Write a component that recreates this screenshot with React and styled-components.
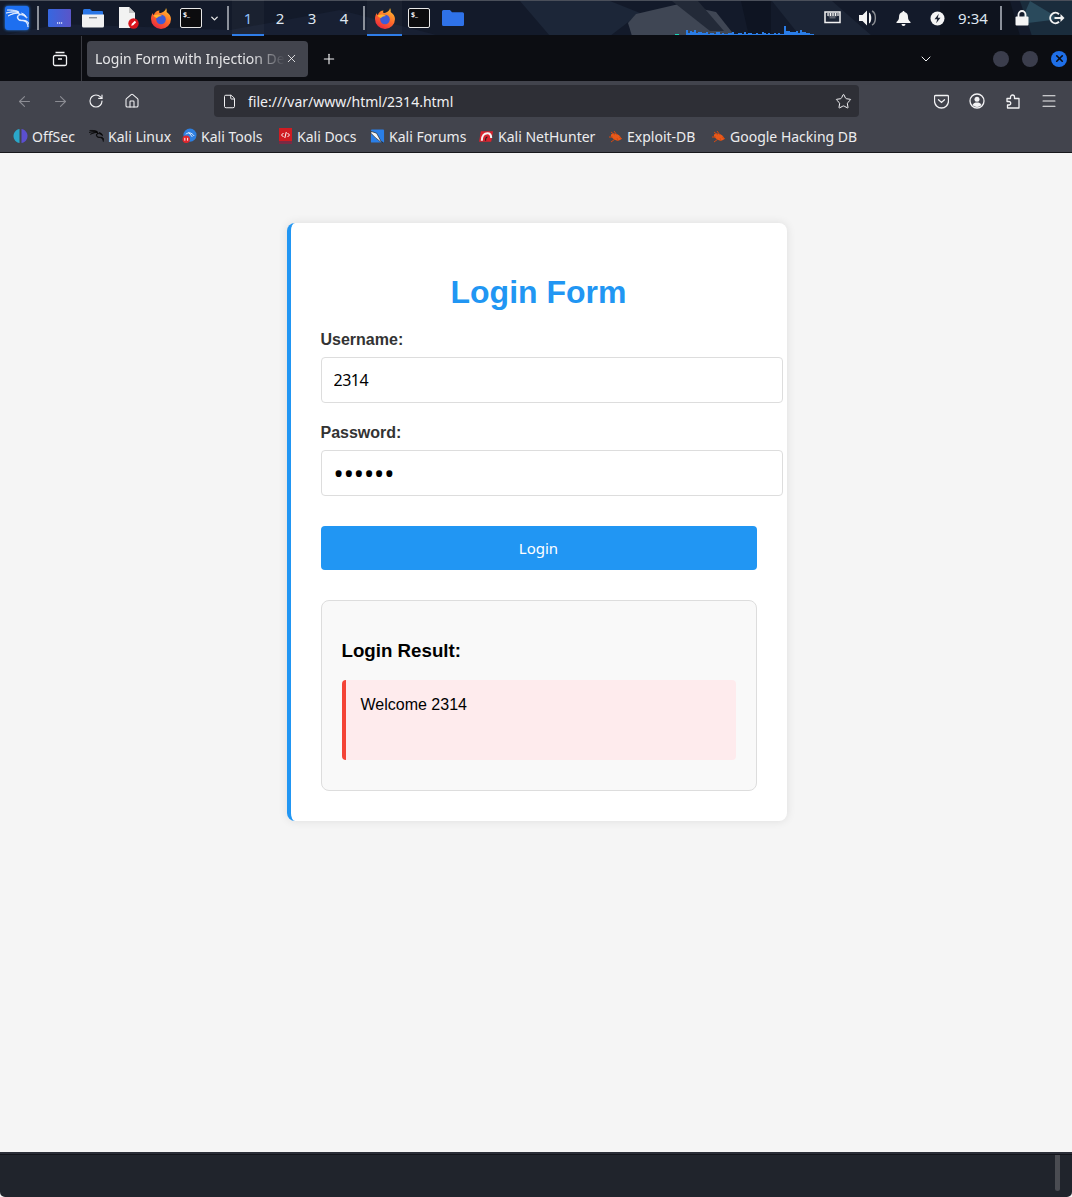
import React from 'react';
import styled, { createGlobalStyle } from 'styled-components';
import { ArrowLeft, ArrowRight, ChevronDown, File, Home, Menu, Plus, RotateCw, Star, X } from 'lucide-react';
import { SiKalilinux } from 'react-icons/si';

const UI_FONT = '"Noto Sans", "Open Sans", sans-serif';
const PAGE_FONT = '"Liberation Sans", Arial, sans-serif';

const GlobalStyle = createGlobalStyle`
  html, body {
    margin: 0;
    padding: 0;
    height: 100%;
    overflow: hidden;
  }
  #root {
    height: 100%;
  }
`;

const Screen = styled.div`
  display: flex;
  flex-direction: column;
  height: 1197px;
  background: #f5f5f5;
  font-family: ${UI_FONT};
`;

/* ---------- desktop panel ---------- */

const Panel = styled.div`
  position: relative;
  display: flex;
  height: 36px;
  flex: none;
  overflow: hidden;
  background: #131a2b;
  color: #fff;
`;

const Wallpaper = styled.svg`
  position: absolute;
  inset: 0;
`;

const Slot = styled.div`
  position: relative;
  display: flex;
  flex: none;
  width: ${(p) => p.$w}px;
  align-items: center;
  justify-content: center;
  box-sizing: border-box;
  padding-left: ${(p) => p.$pad || 0}px;
  background: ${(p) => (p.$active ? 'rgba(255,255,255,0.03)' : 'transparent')};
  border-bottom: 2px solid ${(p) => (p.$active ? '#2f7de8' : 'transparent')};
  border-top: 2px solid transparent;
  font-size: 15px;
  color: ${(p) => (p.$active ? '#8fc0f5' : '#dfe6f0')};
`;

const PanelSep = styled.div`
  width: 2px;
  height: 24px;
  background: #8b909a;
`;

const LogoTile = styled.div`
  display: flex;
  width: 24px;
  height: 24px;
  align-items: center;
  justify-content: center;
  border-radius: 3px;
  background: #1d6ff0;
  box-shadow: 0 0 3px #2f8cff;
  color: #f4f8ff;
`;

const Spacer = styled.div`
  flex: 1;
`;

const Graph = styled.svg`
  position: relative;
  flex: none;
  align-self: flex-end;
  display: block;
`;

/* ---------- browser chrome ---------- */

const TabStrip = styled.div`
  display: flex;
  height: 45px;
  flex: none;
  align-items: center;
  background: #0c0d12;
  color: #f2f2f4;
`;

const ViewButton = styled.div`
  display: flex;
  width: 82px;
  height: 100%;
  box-sizing: border-box;
  flex: none;
  align-items: center;
  justify-content: center;
  padding-left: 38px;
  border-right: 1px solid #3a3b42;
`;

const Tab = styled.div`
  display: flex;
  width: 221px;
  height: 36px;
  margin-left: 5px;
  box-sizing: border-box;
  flex: none;
  align-items: center;
  padding: 0 10px 0 8px;
  border-radius: 4px;
  background: #42444d;
`;

const TabTitle = styled.div`
  flex: 1;
  white-space: nowrap;
  font-size: 14px;
  color: #e6e6e8;
  -webkit-mask-image: linear-gradient(to right, #000 82%, transparent 100%);
  mask-image: linear-gradient(to right, #000 82%, transparent 100%);
`;

const NewTab = styled.div`
  display: flex;
  margin-left: 13px;
  align-items: center;
`;

const ListTabs = styled.div`
  display: flex;
  margin-left: auto;
  margin-right: 59px;
`;

const WindowDot = styled.div`
  display: flex;
  width: 16px;
  height: 16px;
  margin-right: 13px;
  align-items: center;
  justify-content: center;
  border-radius: 50%;
  background: ${(p) => (p.$close ? '#1f6fe8' : '#3b3d4c')};
  color: #0c0d12;
  &:last-child {
    margin-right: 5px;
  }
`;

const NavBar = styled.div`
  display: flex;
  height: 37px;
  flex: none;
  align-items: flex-start;
  background: #42444d;
  color: #f2f2f4;
`;

const NavButton = styled.div`
  display: flex;
  width: 36px;
  height: 32px;
  margin-top: 4px;
  flex: none;
  align-items: center;
  justify-content: center;
  color: ${(p) => (p.$dim ? '#8b8c93' : '#f2f2f4')};
`;

const NavLead = styled.div`
  width: 6px;
  flex: none;
`;

const UrlBar = styled.div`
  display: flex;
  width: 645px;
  height: 32px;
  margin: 4px 0 0 64px;
  box-sizing: border-box;
  flex: none;
  align-items: center;
  padding: 0 7px 0 8px;
  border-radius: 4px;
  background: #2e2f36;
`;

const UrlText = styled.div`
  flex: 1;
  margin-left: 11px;
  font-size: 14px;
  color: #f0f0f2;
`;

const NavRight = styled.div`
  display: flex;
  margin-left: auto;
  padding-right: 5px;
`;

const Bookmarks = styled.div`
  display: flex;
  height: 35px;
  flex: none;
  box-sizing: border-box;
  align-items: center;
  padding: 2px 0 0 13px;
  background: #42444d;
  border-bottom: 1px solid #17181c;
`;

const Bookmark = styled.div`
  display: flex;
  width: ${(p) => p.$w}px;
  flex: none;
  align-items: center;
  gap: 4px;
  white-space: nowrap;
  font-size: 14px;
  color: #ececee;
`;

const BookmarkIcon = styled.span`
  display: flex;
  width: 15px;
  flex: none;
  justify-content: center;
`;

/* ---------- page ---------- */

const Page = styled.main`
  flex: 1;
  min-height: 0;
  padding: 70px 0 0 1px;
`;

const Card = styled.section`
  width: 500px;
  margin: 0 auto;
  padding: 30px;
  box-sizing: border-box;
  border-left: 4px solid #2196f3;
  border-radius: 8px;
  background: #fff;
  box-shadow: 0 0 10px rgba(0, 0, 0, 0.1);
  font-family: ${PAGE_FONT};
`;

const Title = styled.h2`
  margin: 21px 0 20px;
  text-align: center;
  font-size: 32px;
  font-weight: 700;
  line-height: 37px;
  color: #2196f3;
`;

const Label = styled.label`
  display: block;
  margin-bottom: 8px;
  font-size: 16px;
  font-weight: 700;
  line-height: 18px;
  color: #333;
`;

const Field = styled.input`
  display: block;
  width: 100%;
  height: 20px;
  margin-bottom: 21px;
  padding: 12px;
  box-sizing: content-box;
  border: 1px solid #ddd;
  border-radius: 4px;
  outline: none;
  background: #fff;
  font-family: ${UI_FONT};
  font-size: 16px;
  letter-spacing: -0.5px;
  color: #000;
`;

const SecretField = styled(Field)`
  font-size: 27px;
  letter-spacing: 0;
`;

const LoginButton = styled.button`
  display: block;
  width: 100%;
  height: 44px;
  margin-top: 30px;
  padding: 0;
  border: 0;
  border-radius: 4px;
  background: #2196f3;
  font-family: ${UI_FONT};
  font-size: 15px;
  color: #fff;
`;

const ResultBox = styled.div`
  margin-top: 30px;
  padding: 20px;
  box-sizing: border-box;
  border: 1px solid #ddd;
  border-radius: 8px;
  background: #f9f9f9;
`;

const ResultTitle = styled.h3`
  margin: 19px 0 19px;
  font-size: 18.72px;
  font-weight: 700;
  line-height: 21px;
  color: #000;
`;

const Message = styled.div`
  height: 80px;
  margin-bottom: 10px;
  padding: 16px 15px;
  box-sizing: border-box;
  border-left: 4px solid #f44336;
  border-radius: 4px;
  background: #feebed;
  font-size: 16px;
  line-height: 18px;
  color: #000;
`;

/* ---------- bottom panel ---------- */

const BottomPanel = styled.div`
  display: flex;
  height: 45px;
  flex: none;
  box-sizing: border-box;
  justify-content: flex-end;
  padding: 0 12px 6px 0;
  border-top: 2px solid #2b2e38;
  background: #20242c;
  box-shadow: inset 0 1px 0 #12141a;
  border-radius: 0 0 5px 5px;
`;

const PanelGrip = styled.div`
  width: 5px;
  margin-top: 1px;
  border-radius: 0 0 3px 3px;
  background: #4a4c52;
`;

/* ---------- drawn icons ---------- */

const WindowsIcon = () => (
  <svg width="23" height="18" viewBox="0 0 23 18">
    <defs>
      <linearGradient id="winGrad" x1="0" y1="0" x2="1" y2="0">
        <stop offset="0" stopColor="#3667e0" />
        <stop offset="1" stopColor="#5a55c8" />
      </linearGradient>
    </defs>
    <rect width="23" height="18" rx="1" fill="url(#winGrad)" />
    <path d="M9 14h1.200M11 14h1.200M13 14h1.200" stroke="#dfe6ff" strokeWidth="1.600" />
  </svg>
);

const FilesIcon = () => (
  <svg width="22" height="20" viewBox="0 0 22 20">
    <path d="M1 2.5A1.5 1.5 0 0 1 2.500 1H8l2 2h10a1 1 0 0 1 1 1v3H1z" fill="#2a76e6" />
    <path d="M0 6.500h22V18a1.500 1.500 0 0 1-1.500 1.500h-19A1.500 1.500 0 0 1 0 18z" fill="#f1f1f1" />
    <rect x="7" y="9" width="8" height="1.400" fill="#8f9296" />
  </svg>
);

const DocIcon = () => (
  <svg width="21" height="22" viewBox="0 0 21 22">
    <path d="M1 0h10l6 6v15H1z" fill="#f2f2f2" />
    <path d="M11 0l6 6h-6z" fill="#c4c4c4" />
    <circle cx="15.500" cy="16.500" r="5.200" fill="#d8141c" />
    <path d="M13.200 18.800l.6-2 3-3 1.400 1.400-3 3z" fill="#fff" />
  </svg>
);

const FirefoxIcon = ({ id }) => (
  <svg width="22" height="22" viewBox="0 0 22 22">
    <defs>
      <linearGradient id={id} x1="0.800" y1="0" x2="0.200" y2="1">
        <stop offset="0" stopColor="#ffc02e" />
        <stop offset="0.500" stopColor="#ff6a2b" />
        <stop offset="1" stopColor="#e8213f" />
      </linearGradient>
    </defs>
    <path
      d="M16 1c1 2 .8 3 .6 4 2.600 1.800 4.400 4 4.400 7a10 10 0 0 1-20 0c0-2.500.7-4.500 1.800-6 0 1 .4 1.700 1 2C4.500 5.500 7 3.500 9.500 3.500c-.500 1-.4 1.800 0 2.500C12 6 15.500 4.500 16 1z"
      fill={`url(#${id})`}
    />
    <circle cx="11" cy="12.500" r="4.800" fill="#3d5bd8" />
    <path d="M3.500 8.500c3-1.500 6-1.300 8.500.5-2.500 0-4 .7-5 2-1.500-.3-2.800-1.200-3.500-2.500z" fill="#ffb52e" />
  </svg>
);

const TerminalIcon = () => (
  <svg width="22" height="20" viewBox="0 0 22 20">
    <rect x="0.500" y="0.500" width="21" height="19" rx="1.500" fill="#0c0c0e" stroke="#e8e8e8" />
    <text x="3" y="8.500" fontSize="7" fontWeight="700" fontFamily={UI_FONT} fill="#f0f0f0">
      $_
    </text>
  </svg>
);

const FolderIcon = () => (
  <svg width="22" height="16" viewBox="0 0 22 16">
    <path
      d="M0 1.500A1.500 1.500 0 0 1 1.500 0H8l2 2.200h10.500A1.500 1.500 0 0 1 22 3.700v10.800a1.500 1.500 0 0 1-1.500 1.500h-19A1.500 1.500 0 0 1 0 14.500z"
      fill="#2f72e8"
    />
  </svg>
);

const NetworkIcon = () => (
  <svg width="17" height="14" viewBox="0 0 17 14">
    <path d="M1 1h15v10.500H1z" fill="none" stroke="#f2f2f2" strokeWidth="1.500" />
    <path d="M4 1.500h9v4h-1.500v2h-6v-2H4z" fill="#f2f2f2" fillOpacity="0.3" />
    <path d="M4 2v3M6.500 2v3M9 2v3M11.500 2v3M14 2v3" stroke="#f2f2f2" strokeWidth="1.200" />
  </svg>
);

const VolumeIcon = () => (
  <svg width="18" height="16" viewBox="0 0 18 16">
    <path d="M0 5h3.500L8 .5v15L3.500 11H0z" fill="#f4f4f4" />
    <path d="M10 2.500c3 1 3 10 0 11z" fill="#f4f4f4" />
    <path d="M13 1c4.500 2 4.500 12 0 14" fill="none" stroke="#8a8d92" strokeWidth="1.400" />
  </svg>
);

const BellIcon = () => (
  <svg width="15" height="15" viewBox="0 0 15 15">
    <path
      d="M7.500 0c.7 0 1 .5 1 1 2.500.6 3.500 2.500 3.500 5 0 2.500 1 3.500 2.500 5v1H.500v-1C2 9.500 3 8.500 3 6c0-2.500 1-4.400 3.500-5 0-.5.300-1 1-1zM5.500 13h4a2 2 0 0 1-4 0z"
      fill="#f4f4f4"
    />
  </svg>
);

const PowerIcon = () => (
  <svg width="15" height="15" viewBox="0 0 15 15">
    <circle cx="7.500" cy="7.500" r="7" fill="#f4f4f4" />
    <path d="M8.800 2.800L4.500 8.300h2.700l-1 3.900 4.300-5.500H7.800z" fill="#1a2030" />
  </svg>
);

const LockIcon = () => (
  <svg width="14" height="16" viewBox="0 0 14 16">
    <path d="M3.500 7V4.500a3.500 3.500 0 0 1 7 0V7" fill="none" stroke="#f4f4f4" strokeWidth="1.800" />
    <rect x="0.500" y="6.500" width="13" height="9" rx="1" fill="#f4f4f4" />
  </svg>
);

const LogoutIcon = () => (
  <svg width="16" height="14" viewBox="0 0 16 14">
    <path d="M10 3.200A5.200 5.200 0 1 0 10 10.800" fill="none" stroke="#f2f2f2" strokeWidth="2" />
    <path d="M5.500 6h6V3l4 4-4 4V8h-6z" fill="#f2f2f2" />
  </svg>
);

const ViewIcon = () => (
  <svg width="16" height="16" viewBox="0 0 16 16">
    <path
      d="M3.500 1.500h9M1.500 6a1.500 1.500 0 0 1 1.500-1.500h10A1.500 1.500 0 0 1 14.500 6v7a1.500 1.500 0 0 1-1.500 1.500H3A1.500 1.500 0 0 1 1.500 13zM6 8h4"
      fill="none"
      stroke="#f2f2f4"
      strokeWidth="1.300"
    />
  </svg>
);

const PocketIcon = () => (
  <svg width="15" height="15" viewBox="0 0 15 15">
    <path
      d="M1.500 1.500h12A1 1 0 0 1 14.500 2.500V7A7 7 0 0 1 .5 7V2.500a1 1 0 0 1 1-1zM4.500 5.800l3 2.700 3-2.700"
      fill="none"
      stroke="#f2f2f4"
      strokeWidth="1.300"
      strokeLinecap="round"
    />
  </svg>
);

const AccountIcon = () => (
  <svg width="16" height="16" viewBox="0 0 16 16">
    <circle cx="8" cy="8" r="7" fill="none" stroke="#f2f2f4" strokeWidth="1.300" />
    <circle cx="8" cy="6.300" r="2.500" fill="#f2f2f4" />
    <path d="M3.500 12c1-2 2.500-2.500 4.500-2.500s3.500.5 4.500 2.500c-1 1.200-2.700 2-4.500 2s-3.500-.8-4.500-2z" fill="#f2f2f4" />
  </svg>
);

const ExtensionIcon = () => (
  <svg width="15" height="16" viewBox="0 0 15 16">
    <path
      d="M1 5.500h3.500V4a2 2 0 0 1 4 0v1.500H13V15H1.500v-3H3a1.700 1.700 0 0 0 0-3.500H1z"
      fill="none"
      stroke="#f2f2f4"
      strokeWidth="1.300"
      strokeLinejoin="round"
    />
  </svg>
);

const OffSecIcon = () => (
  <svg width="15" height="16" viewBox="0 0 15 16">
    <path d="M6.500 1C3 1.500.5 4.500.5 8s2.500 6.500 6 7z" fill="#2aa7c9" />
    <path d="M8.500 1c3.500.5 6 3.500 6 7s-2.500 6.500-6 7z" fill="#5b4fd0" />
  </svg>
);

const ToolsIcon = () => (
  <svg width="16" height="16" viewBox="0 0 16 16">
    <circle cx="8.500" cy="7" r="7" fill="#2d7fe0" />
    <path d="M4 6c3-2 6-2 9 2M7 4l4 5" fill="none" stroke="#e6f0ff" strokeWidth="1" />
    <circle cx="4.500" cy="11.500" r="4" fill="#e0262c" />
    <path d="M3 10v3M6 10v3" stroke="#fff" strokeWidth="1" />
  </svg>
);

const DocsIcon = () => (
  <svg width="15" height="16" viewBox="0 0 15 16">
    <rect x="1" y="0" width="13" height="14" fill="#d01c22" />
    <rect x="1" y="13" width="13" height="3" fill="#7a2a44" />
    <path d="M5.500 5L3.500 7l2 2M9.500 5l2 2-2 2M8.300 4L6.800 10" fill="none" stroke="#fff" strokeWidth="1" />
  </svg>
);

const ForumsIcon = () => (
  <svg width="16" height="16" viewBox="0 0 16 16">
    <rect x="1" y="1" width="14" height="14" rx="1" fill="#2a7fe8" />
    <path d="M1 3l6 2 5 9 2 1-3-1-5-4-5-5z" fill="#f4f4f4" stroke="#222" strokeWidth="0.700" />
  </svg>
);

const HunterIcon = () => (
  <svg width="16" height="16" viewBox="0 0 16 16">
    <path d="M2 3h13l-2 11H0z" fill="#d8232e" />
    <path d="M3 13c0-6 3-8 6-8s4 2 4 5" fill="none" stroke="#f4f4f4" strokeWidth="2.200" />
    <path d="M7 13c0-2 1-4 2-4" fill="none" stroke="#222" strokeWidth="1.200" />
  </svg>
);

const BugIcon = () => (
  <svg width="15" height="14" viewBox="0 0 15 14">
    <ellipse cx="8" cy="8" rx="5.500" ry="3" fill="#e8591a" transform="rotate(25 8 8)" />
    <path d="M3 3l4 3M6 2l3 4M1 8l4 0M3 13l4-3M10 12l-1-3M14 10l-3-2" stroke="#d9490f" strokeWidth="1" />
  </svg>
);

/* ---------- data ---------- */

const WORKSPACES = ['1', '2', '3', '4'];

const BOOKMARKS = [
  { name: 'OffSec', w: 76, icon: <OffSecIcon /> },
  { name: 'Kali Linux', w: 93, icon: <SiKalilinux size={20} color="#050506" stroke="#050506" strokeWidth={0.9} /> },
  { name: 'Kali Tools', w: 96, icon: <ToolsIcon /> },
  { name: 'Kali Docs', w: 92, icon: <DocsIcon /> },
  { name: 'Kali Forums', w: 109, icon: <ForumsIcon /> },
  { name: 'Kali NetHunter', w: 129, icon: <HunterIcon /> },
  { name: 'Exploit-DB', w: 103, icon: <BugIcon /> },
  { name: 'Google Hacking DB', w: 150, icon: <BugIcon /> },
];

// heights of the network monitor bars, one every 2px starting at x=686
const NET_BARS = [
  5, 2, 4, 3, 5, 2, 3, 3, 2, 2, 3, 1, 2, 2, 1, 3, 3, 1, 2, 1, 1, 2, 2, 3, 1, 1, 2, 2, 1, 3, 1, 2, 2, 1, 1, 2, 1, 1, 3,
  2, 1, 2, 1, 1, 2, 1, 2, 1, 1, 9, 4, 4, 3, 3, 3, 4, 2, 5, 3, 3, 2, 2, 1, 1,
];

const NetGraph = () => (
  <Graph width="140" height="10" viewBox="0 0 140 10">
    <rect x="0" y="8" width="4" height="1" fill="#19d6b8" />
    {NET_BARS.map((h, i) => (
      <rect key={i} x={11 + i * 2} y={9 - h} width="2" height={h} fill="#2a7de8" />
    ))}
  </Graph>
);

const App = () => (
  <Screen>
    <GlobalStyle />

    <Panel>
      <Wallpaper width="1072" height="36" viewBox="0 0 1072 36">
        <rect width="1072" height="36" fill="#131a2a" />
        <rect width="1072" height="1" fill="#4a4f5a" />
        <path d="M0 36L60 24 230 30 340 10 440 36z" fill="#182033" />
        <path d="M520 1h90l30 12-30 23h-60z" fill="#1c2638" />
        <path d="M628 23L636 14 679 4 716 12 735 36H632z" fill="#3f4654" />
        <path d="M672 1h26l26 30-14 0z" fill="#232a38" />
        <path d="M741 1h30v35h-22z" fill="#0e1422" />
        <path d="M772 1h60l40 35H800z" fill="#1c2536" />
        <path d="M940 1h70l10 35h-80z" fill="#0e131e" />
        <path d="M1020 1h52v35h-40z" fill="#1a2c3c" />
        <path d="M1030 1l30 18-40 5z" fill="#2a4a5c" />
        <rect y="35" width="1072" height="1" fill="#0b0d13" />
      </Wallpaper>
      <Slot $w={34}>
        <LogoTile>
          <SiKalilinux size={23} stroke="#f4f8ff" strokeWidth={0.7} />
        </LogoTile>
      </Slot>
      <Slot $w={8}>
        <PanelSep />
      </Slot>
      <Slot $w={34}>
        <WindowsIcon />
      </Slot>
      <Slot $w={34}>
        <FilesIcon />
      </Slot>
      <Slot $w={36}>
        <DocIcon />
      </Slot>
      <Slot $w={30}>
        <FirefoxIcon id="ffPanel" />
      </Slot>
      <Slot $w={30}>
        <TerminalIcon />
      </Slot>
      <Slot $w={17}>
        <ChevronDown size={11} strokeWidth={3} color="#e8e8e8" />
      </Slot>
      <Slot $w={9}>
        <PanelSep />
      </Slot>
      {WORKSPACES.map((n) => (
        <Slot key={n} $w={32} $active={n === '1'}>
          {n}
        </Slot>
      ))}
      <Slot $w={7}>
        <PanelSep />
      </Slot>
      <Slot $w={35} $active>
        <FirefoxIcon id="ffTask" />
      </Slot>
      <Slot $w={34}>
        <TerminalIcon />
      </Slot>
      <Slot $w={34}>
        <FolderIcon />
      </Slot>
      <Spacer />
      <NetGraph />
      <Slot $w={34}>
        <NetworkIcon />
      </Slot>
      <Slot $w={38}>
        <VolumeIcon />
      </Slot>
      <Slot $w={32}>
        <BellIcon />
      </Slot>
      <Slot $w={36}>
        <PowerIcon />
      </Slot>
      <Slot $w={36}>9:34</Slot>
      <Slot $w={20}>
        <PanelSep />
      </Slot>
      <Slot $w={22}>
        <LockIcon />
      </Slot>
      <Slot $w={39} $pad={9}>
        <LogoutIcon />
      </Slot>
    </Panel>

    <TabStrip>
      <ViewButton>
        <ViewIcon />
      </ViewButton>
      <Tab>
        <TabTitle>Login Form with Injection De</TabTitle>
        <X size={13} strokeWidth={1.6} />
      </Tab>
      <NewTab>
        <Plus size={16} strokeWidth={1.7} />
      </NewTab>
      <ListTabs>
        <ChevronDown size={16} strokeWidth={1.5} color="#f2f2f4" />
      </ListTabs>
      <WindowDot />
      <WindowDot />
      <WindowDot $close>
        <X size={11} strokeWidth={3.5} />
      </WindowDot>
    </TabStrip>

    <NavBar>
      <NavLead />
      <NavButton $dim>
        <ArrowLeft size={17} strokeWidth={1.5} />
      </NavButton>
      <NavButton $dim>
        <ArrowRight size={17} strokeWidth={1.5} />
      </NavButton>
      <NavButton>
        <RotateCw size={16} strokeWidth={1.7} />
      </NavButton>
      <NavButton>
        <Home size={16} strokeWidth={1.6} />
      </NavButton>
      <UrlBar>
        <File size={15} strokeWidth={1.6} />
        <UrlText>file:///var/www/html/2314.html</UrlText>
        <Star size={17} strokeWidth={1.4} />
      </UrlBar>
      <NavRight>
        <NavButton>
          <PocketIcon />
        </NavButton>
        <NavButton>
          <AccountIcon />
        </NavButton>
        <NavButton>
          <ExtensionIcon />
        </NavButton>
        <NavButton>
          <Menu size={18} strokeWidth={1.4} />
        </NavButton>
      </NavRight>
    </NavBar>

    <Bookmarks>
      {BOOKMARKS.map((b) => (
        <Bookmark key={b.name} $w={b.w}>
          <BookmarkIcon>{b.icon}</BookmarkIcon>
          {b.name}
        </Bookmark>
      ))}
    </Bookmarks>

    <Page>
      <Card>
        <Title>Login Form</Title>
        <Label htmlFor="username">Username:</Label>
        <Field id="username" type="text" defaultValue="2314" />
        <Label htmlFor="password">Password:</Label>
        <SecretField id="password" type="password" defaultValue="123456" />
        <LoginButton type="button">Login</LoginButton>
        <ResultBox>
          <ResultTitle>Login Result:</ResultTitle>
          <Message>Welcome 2314</Message>
        </ResultBox>
      </Card>
    </Page>

    <BottomPanel>
      <PanelGrip />
    </BottomPanel>
  </Screen>
);

export default App;
